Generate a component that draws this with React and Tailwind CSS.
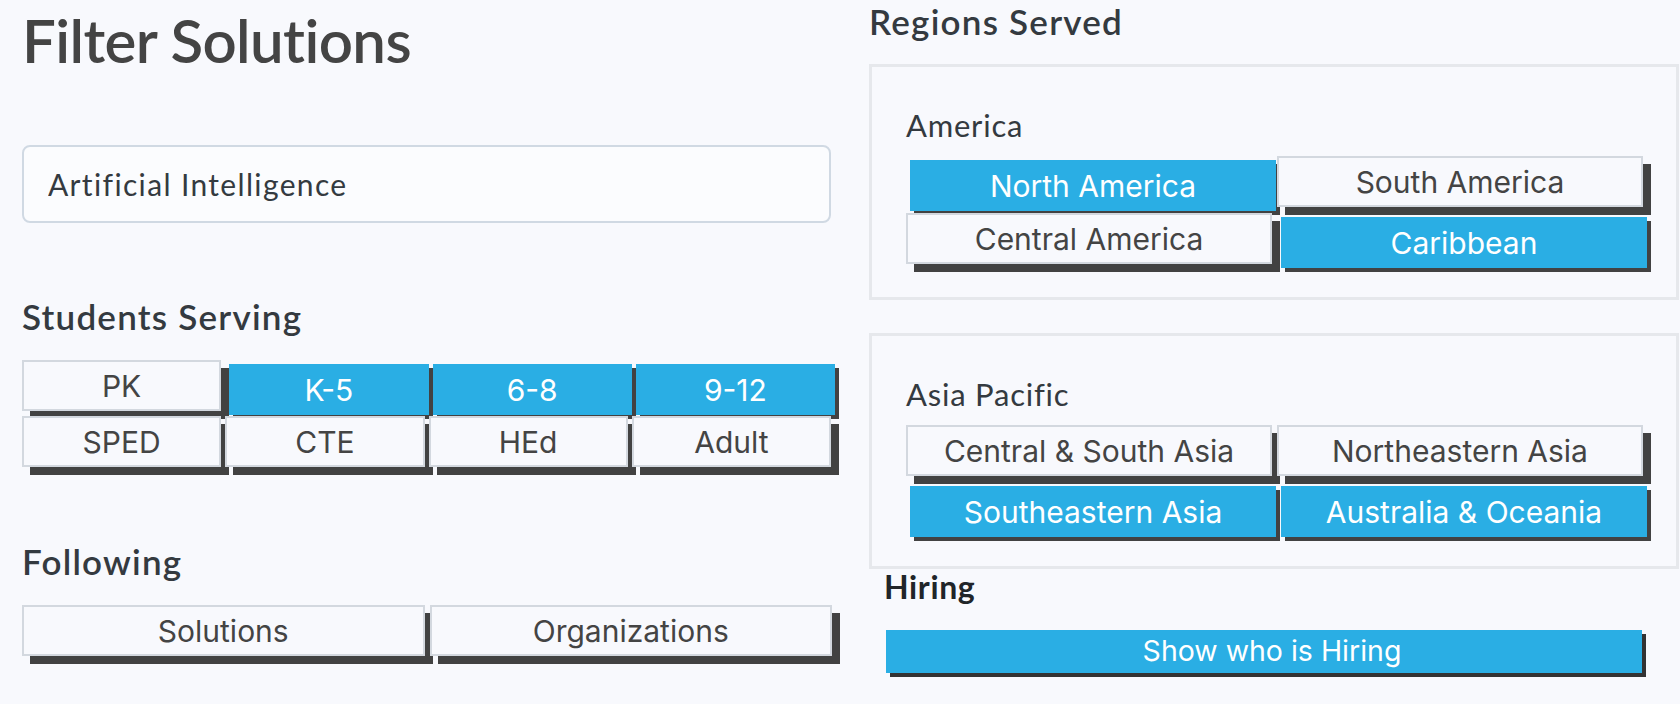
import React, { useState } from 'react';

function Choice({ label, active, onClick }) {
    return (
        <button
            onClick={onClick}
            className={`relative h-[51px] w-full cursor-pointer border-2 font-['Inter',Roboto,sans-serif] text-[30px] leading-none ${active
                ? 'translate-x-[4px] translate-y-[4px] border-[#2aaee4] bg-[#2aaee4] text-white shadow-[4px_4px_0_#424242]'
                : 'border-[#d3d8df] bg-[#f8f9fd] text-[#444] shadow-[8px_8px_0_#424242]'}`}
        >
            {label}
        </button>
    );
}

function RegionBox({ title, items, selected, toggle }) {
    return (
        <div className="h-[236px] border-[3px] border-[#e6e8ec] bg-[#f8f9fd] pl-[34px] pt-[40px]">
            <div className="font-['Lato',sans-serif] text-[31px] leading-[36px] tracking-[0.025em] text-[#343a40]">{title}</div>
            <div className="mt-[13px] grid w-[737px] grid-cols-2 gap-x-[5px] gap-y-[6px]">
                {items.map((it) => (
                    <Choice key={it} label={it} active={selected.includes(it)} onClick={() => toggle(it)} />
                ))}
            </div>
        </div>
    );
}

export default function App() {
    const [grades, setGrades] = useState(['K-5', '6-8', '9-12']);
    const [following, setFollowing] = useState([]);
    const [regions, setRegions] = useState(['North America', 'Caribbean', 'Southeastern Asia', 'Australia & Oceania']);
    const [query, setQuery] = useState('Artificial Intelligence');

    const flip = (list, setList) => (v) =>
        setList(list.includes(v) ? list.filter((x) => x !== v) : [...list, v]);

    const sectionTitle = "font-['Lato',sans-serif] text-[35px] font-semibold leading-[38px] tracking-[0.035em] text-[#343a40] [font-variant-ligatures:none]";

    return (
        <div className="flex h-[704px] w-full overflow-hidden bg-[#f8f9fd] pl-[22px]">
            {/* left column */}
            <div className="w-[810px]">
                <h1 className="mt-[4px] font-['Lato',sans-serif] text-[60px] font-semibold leading-[72px] tracking-[-0.01em] text-[#444] [font-variant-ligatures:none]">
                    Filter Solutions
                </h1>

                <input
                    value={query}
                    onChange={(e) => setQuery(e.target.value)}
                    className="mt-[69px] block h-[78px] w-[809px] rounded-lg border-2 border-[#d0d9e3] bg-[#fbfcfe] px-[24px] font-['Lato',sans-serif] text-[30px] tracking-[0.045em] text-[#343a40] outline-none [font-variant-ligatures:none]"
                />

                <h2 className={`mt-[74px] ${sectionTitle}`}>Students Serving</h2>
                <div className="mt-[25px] grid w-[809px] grid-cols-4 gap-x-[4px] gap-y-[5px]">
                    {['PK', 'K-5', '6-8', '9-12', 'SPED', 'CTE', 'HEd', 'Adult'].map((g) => (
                        <Choice key={g} label={g} active={grades.includes(g)} onClick={() => flip(grades, setGrades)(g)} />
                    ))}
                </div>

                <h2 className={`mt-[75px] ${sectionTitle}`}>Following</h2>
                <div className="mt-[25px] grid w-[810px] grid-cols-2 gap-x-[5px]">
                    {['Solutions', 'Organizations'].map((f) => (
                        <Choice key={f} label={f} active={following.includes(f)} onClick={() => flip(following, setFollowing)(f)} />
                    ))}
                </div>
            </div>

            {/* right column */}
            <div className="ml-[37px] w-[810px]">
                <h2 className={`mt-[2px] ${sectionTitle}`}>Regions Served</h2>
                <div className="mt-[24px] flex flex-col gap-[33px]">
                    <RegionBox
                        title="America"
                        items={['North America', 'South America', 'Central America', 'Caribbean']}
                        selected={regions}
                        toggle={flip(regions, setRegions)}
                    />
                    <RegionBox
                        title="Asia Pacific"
                        items={['Central & South Asia', 'Northeastern Asia', 'Southeastern Asia', 'Australia & Oceania']}
                        selected={regions}
                        toggle={flip(regions, setRegions)}
                    />
                </div>
                <h3 className="ml-[15px] font-['Lato',sans-serif] text-[32px] font-bold leading-[36px] tracking-[0.02em] text-[#212529]">Hiring</h3>
                <button className="ml-[17px] mt-[25px] h-[43px] w-[756px] bg-[#2aaee4] pl-[16px] font-['Inter',Roboto,sans-serif] text-[28.5px] leading-none text-white shadow-[4px_4px_0_#333]">
                    Show who is Hiring
                </button>
            </div>
        </div>
    );
}
